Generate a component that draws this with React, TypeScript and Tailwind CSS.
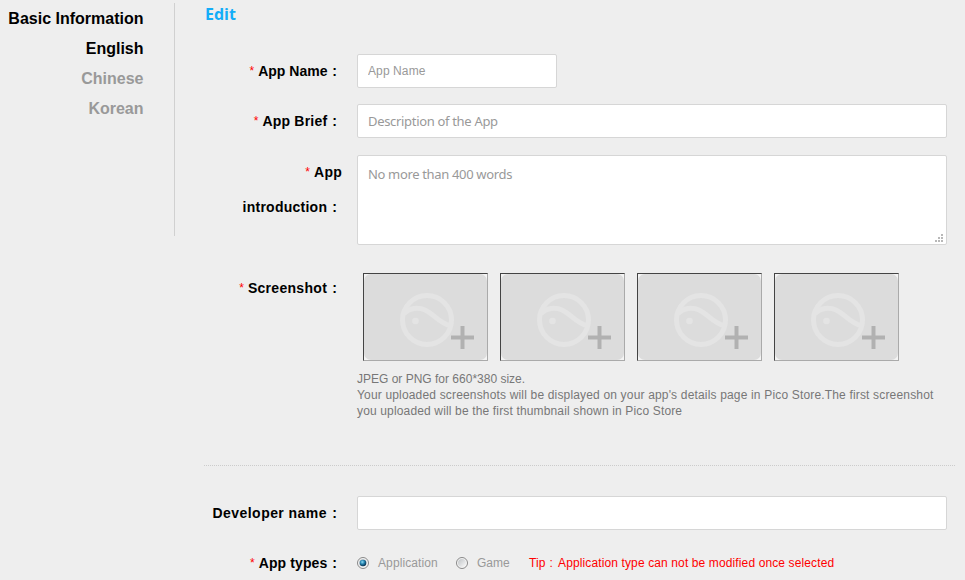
import type { ReactNode } from "react";

const field = "block rounded-[2px] border border-[#d6d6d6] bg-white outline-none placeholder:text-[#999] placeholder:opacity-100";

function Label({ children, required = false, tracking = "" }: { children: ReactNode; required?: boolean; tracking?: string }) {
  return (
    <div className={`w-[138px] shrink-0 whitespace-nowrap text-right text-[14px] font-bold leading-[35px] text-black ${tracking}`}>
      {required && <span className="mr-[4px] align-[1px] text-[12px] font-normal leading-none tracking-normal text-[#f00]">*</span>}
      {children}
    </div>
  );
}

function Colon() {
  return <span className="ml-px mr-[5px] tracking-normal">:</span>;
}

function Thumbnail() {
  return (
    <button className="block h-[88px] w-[125px] border border-b-[#aaa] border-l-[#444] border-r-[#aaa] border-t-[#444] bg-[#f4f4f4]">
      <svg viewBox="0 0 123 86" className="block h-[86px] w-[123px]">
        <rect width="123" height="86" rx="7" fill="#dcdcdc" />
        <g fill="none" stroke="#e4e4e4" strokeWidth="5">
          <circle cx="63" cy="46" r="24.5" />
          <path d="M40 39.500C45 34 54 33 61 36C70 40 75 49 86 51.500" />
        </g>
        <circle cx="51.5" cy="47" r="3.3" fill="#e4e4e4" />
        <path d="M87 63.500H110M98.500 52V75" stroke="#b1b1b1" strokeWidth="4" />
      </svg>
    </button>
  );
}

function Radio({ checked = false }: { checked?: boolean }) {
  return (
    <svg viewBox="0 0 12 12" className="block h-3 w-3 shrink-0">
      <defs>
        <linearGradient id="radio-face" x1="0" y1="0" x2="1" y2="1">
          <stop offset="0" stopColor="#bfc3c6" />
          <stop offset="1" stopColor="#fafafa" />
        </linearGradient>
        <radialGradient id="radio-dot" cx=".4" cy=".35" r=".65">
          <stop offset="0" stopColor="#8fdcf5" />
          <stop offset=".5" stopColor="#2381ad" />
          <stop offset="1" stopColor="#092f4c" />
        </radialGradient>
      </defs>
      <circle cx="6" cy="6" r="5.5" fill="#f5f5f5" stroke="#888" />
      <circle cx="6" cy="6" r="4" fill="url(#radio-face)" />
      {checked && <circle cx="6" cy="6" r="3.3" fill="url(#radio-dot)" />}
    </svg>
  );
}

export default function App() {
  return (
    <div className="flex h-[580px] w-[965px] overflow-hidden bg-[#eee] font-['Liberation_Sans',Arial,sans-serif]">
      <nav className="mt-[3px] h-[233px] w-[175px] shrink-0 border-r border-[#d0d0d0] pr-[30.5px] pt-px text-right text-base font-bold leading-[30px] text-[#999]">
        <div className="whitespace-nowrap text-black">Basic Information</div>
        <div className="text-black">English</div>
        <div>Chinese</div>
        <div>Korean</div>
      </nav>
      <main className="w-[790px] pl-[29px]">
        <h1 className="h-[54px] pl-px pt-1 font-['Open_Sans',sans-serif] text-base font-bold leading-5 text-[#13adf8]">Edit</h1>
        <div className="flex h-[50px] gap-[15px]">
          <Label required>App Name <Colon /></Label>
          <input placeholder="App Name" className={`${field} h-[34px] w-[200px] px-[10px] text-[12px] tracking-[.1px]`} />
        </div>
        <div className="flex h-[51px] gap-[15px]">
          <Label required tracking="tracking-[.2px]">App Brief <Colon /></Label>
          <input placeholder="Description of the App" className={`${field} h-[34px] w-[590px] px-[10px] font-['Noto_Sans',sans-serif] text-[13px] tracking-[-.32px]`} />
        </div>
        <div className="flex h-[118px] gap-[15px]">
          <Label required tracking="tracking-[.25px]">App<br />introduction <Colon /></Label>
          <div className="relative h-[90px]">
            <textarea placeholder="No more than 400 words" className={`${field} h-[90px] w-[590px] resize-none px-[10px] py-[9px] font-['Noto_Sans',sans-serif] text-[13px] leading-[18px] tracking-[-.34px]`} />
            <svg viewBox="0 0 8 8" className="absolute bottom-[3px] right-[4px] h-2 w-2" fill="#b8b8b8">
              <path d="M6 0h2v2H6zM3 3h2v2H3zM6 3h2v2H6zM0 6h2v2H0zM3 6h2v2H3zM6 6h2v2H6z" />
            </svg>
          </div>
        </div>
        <div className="flex h-[193px] w-[751px] gap-[15px] border-b border-dotted border-[#ccc]">
          <div className="-mt-[2px]"><Label required tracking="tracking-[.3px]">Screenshot <Colon /></Label></div>
          <div>
            <div className="flex gap-[12px] pl-[6px]">
              <Thumbnail />
              <Thumbnail />
              <Thumbnail />
              <Thumbnail />
            </div>
            <div className="mt-[10px] whitespace-nowrap text-[12px] leading-4 text-[#777]">
              <p>JPEG or PNG for 660*380 size.</p>
              <p className="tracking-[.168px]">Your uploaded screenshots will be displayed on your app's details page in Pico Store.The first screenshot</p>
              <p className="tracking-[.15px]">you uploaded will be the first thumbnail shown in Pico Store</p>
            </div>
          </div>
        </div>
        <div className="flex h-[79px] gap-[15px] pt-[30px]">
          <Label tracking="tracking-[.45px]">Developer name <Colon /></Label>
          <input aria-label="Developer name" className={`${field} h-[34px] w-[590px] px-[10px]`} />
        </div>
        <div className="flex h-[35px] gap-[15px]">
          <div className="pt-px"><Label required tracking="tracking-[.1px]">App types <Colon /></Label></div>
          <div className="flex h-[35px] items-center whitespace-nowrap text-[12px] text-[#999]">
            <Radio checked />
            <span className="ml-[9px] w-[78px] tracking-[.1px]">Application</span>
            <Radio />
            <span className="ml-[9px] w-[52px]">Game</span>
            <span className="tracking-[.12px] text-[#f00]">Tip<span className="ml-[4px] mr-[5px]">:</span>Application type can not be modified once selected</span>
          </div>
        </div>
      </main>
    </div>
  );
}
